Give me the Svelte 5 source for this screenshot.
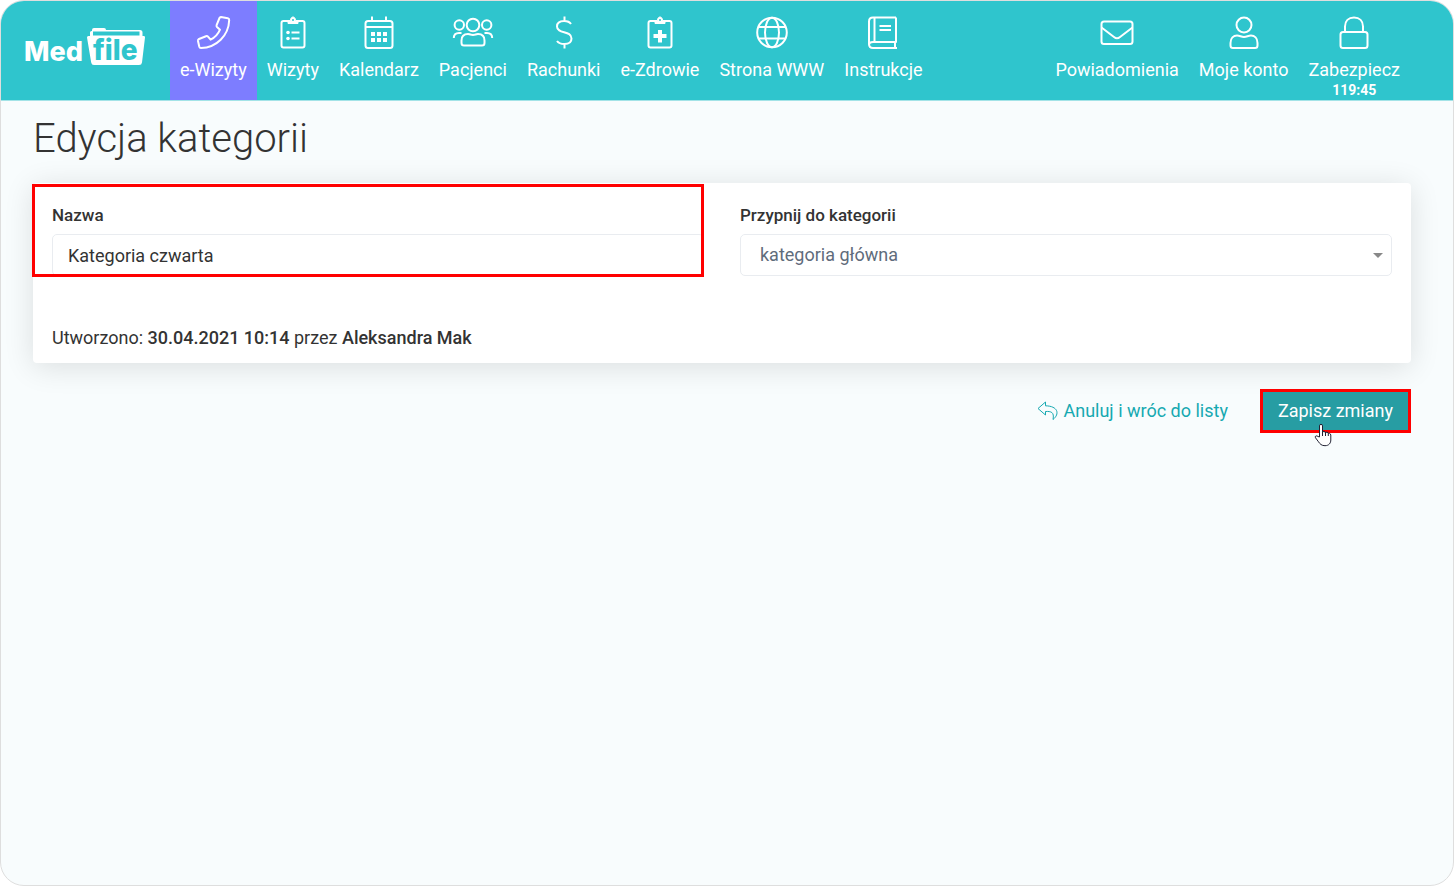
<script>
    let name = $state("Kategoria czwarta");
    let parent = $state("main");

    const mainNav = [
        { label: "e-Wizyty", icon: "phone", active: true },
        { label: "Wizyty", icon: "list" },
        { label: "Kalendarz", icon: "calendar" },
        { label: "Pacjenci", icon: "people" },
        { label: "Rachunki", icon: "dollar" },
        { label: "e-Zdrowie", icon: "health" },
        { label: "Strona WWW", icon: "globe" },
        { label: "Instrukcje", icon: "book" }
    ];
    const userNav = [
        { label: "Powiadomienia", icon: "mail" },
        { label: "Moje konto", icon: "user" },
        { label: "Zabezpiecz", icon: "lock", timer: "119:45" }
    ];
</script>

{#snippet icon(type)}
    <svg class="icon" viewBox="0 0 42 34" aria-hidden="true">
        {#if type == "phone"}
            <path d="M29 2L35.800 3.200Q37.300 3.500 37.200 5.200C36.600 20.500 24.500 32.600 9 33Q7.600 33 7.300 31.800L6 26Q5.800 24.600 7 24L14 21.200Q15.200 20.800 16 21.700L18.600 24.700C23 22.500 26.200 19 28 14.700L25 12Q24.200 11.200 24.600 10.100L27.500 3Q28 1.900 29 2Z" />
        {:else if type == "list" || type == "health"}
            <path d="M16 6H11.500Q9.500 6 9.500 8V30.500Q9.500 32.500 11.500 32.500H30.500Q32.500 32.500 32.500 30.500V8Q32.500 6 30.500 6H26" />
            <path d="M16 8.500V5.500H18.500C18.500 .8 23.500 .8 23.500 5.500H26V8.500Z" class="clip" />
            <circle cx="21" cy="5" r="1" class="hole" />
            {#if type == "list"}
                <path d="M19.500 17.500H27.500M19.500 23.500H27.500" />
                <circle cx="16" cy="17.500" r="1.800" class="solid" />
                <circle cx="16" cy="23.500" r="1.800" class="solid" />
            {:else}
                <path d="M19 15H23V19H27.500V23H23V27.500H19V23H14.500V19H19Z" class="solid" />
            {/if}
        {:else if type == "calendar"}
            <rect x="7.500" y="6" width="27" height="27" rx="2.500" />
            <path d="M7.500 12H34.500M14 1.500V6M28 1.500V6" />
            <path d="M13 17h4v4h-4zM19 17h4v4h-4zM25 17h4v4h-4zM13 23h4v4h-4zM19 23h4v4h-4zM25 23h4v4h-4z" class="solid" />
        {:else if type == "people"}
            <circle cx="21" cy="10" r="6.300" />
            <circle cx="7.300" cy="10" r="4.700" />
            <circle cx="34.700" cy="10" r="4.700" />
            <path d="M12 30.500Q9.500 30.500 9.500 28V25.500C9.500 21 12.500 19 16 19Q17.500 19 18.500 19.500Q21 20.300 23.500 19.500Q24.500 19 26 19C29.500 19 32.500 21 32.500 25.500V28Q32.500 30.500 30 30.500Z" />
            <path d="M1.800 23C1.800 19.500 4 18 7 18H9.500M40.200 23C40.200 19.500 38 18 35 18H32.500" />
        {:else if type == "dollar"}
            <path d="M28 9C26.500 6.500 24 6 21 6C16.500 6 14 8.200 14 11.500C14 19.500 28.500 15 28.500 23.500C28.500 27 26 29 21.500 29C18 29 15.500 28.300 14 26M21.500 1.500V6M21.500 29V33.500" />
        {:else if type == "globe"}
            <circle cx="21" cy="17.500" r="14.800" />
            <ellipse cx="21" cy="17.500" rx="7" ry="14.800" />
            <path d="M7.500 12H34.500M7.500 23.500H34.500" />
        {:else if type == "book"}
            <path d="M34 2.500H11Q7 2.500 7 6.500V29Q7 33 11 33H35M34 2.500V27H11Q7 27 7 30M12.500 3V27M33 27V33M17.500 11H29M17.500 15H29" />
        {:else if type == "mail"}
            <rect x="5.500" y="6.500" width="31" height="22.500" rx="2.500" />
            <path d="M5.500 12.500L18 22Q21 24.500 24 22L36.500 12.500" />
        {:else if type == "user"}
            <circle cx="21" cy="10" r="7.500" />
            <path d="M10 33Q7.500 33 7.500 30.500V28C7.500 23 10.500 20.500 14 20.500C17 20.500 18 22 21 22C24 22 25 20.500 28 20.500C31.500 20.500 34.500 23 34.500 28V30.500Q34.500 33 32 33Z" />
        {:else if type == "lock"}
            <rect x="7.500" y="17" width="27" height="16" rx="2.500" />
            <path d="M12 17V11.500C12 6 15.500 2.500 21 2.500C26.500 2.500 30 6 30 11.500V17" />
        {/if}
    </svg>
{/snippet}

{#snippet navItem(item)}
    <a class="navItem" class:active={item.active} href="/">
        {@render icon(item.icon)}
        <span>{item.label}</span>
        {#if item.timer}
            <strong>{item.timer}</strong>
        {/if}
    </a>
{/snippet}

<div class="page">
    <header>
        <a class="logo" href="/" aria-label="Med file">
            <svg viewBox="0 0 122 40">
                <text x="-1" y="33" class="med">Med</text>
                <path d="M65 8V4.500Q65 3 66.500 3H67V2Q67 0 69 0H79Q81 0 81 2H115Q117.500 2 117.500 4.500V8H119Q120.200 8 120 9.500L117 34.500Q116.700 37 114 37H69Q66.500 37 66.200 34.500L62 9.500Q61.800 8 63.500 8Z" class="folder" />
                <path d="M68 3.500H114.500V7.500H68Z" class="slot" />
                <text x="68" y="32" class="file">file</text>
            </svg>
        </a>
        <nav>
            {#each mainNav as item}
                {@render navItem(item)}
            {/each}
        </nav>
        <nav class="user">
            {#each userNav as item}
                {@render navItem(item)}
            {/each}
        </nav>
    </header>

    <main>
        <h1>Edycja kategorii</h1>
        <form>
            <div class="card">
                <div class="fields">
                    <div class="field marked">
                        <label for="name">Nazwa</label>
                        <input id="name" type="text" bind:value={name}>
                    </div>
                    <div class="field">
                        <label for="parent">Przypnij do kategorii</label>
                        <div class="selectBox">
                            <select id="parent" bind:value={parent}>
                                <option value="main">kategoria główna</option>
                            </select>
                        </div>
                    </div>
                </div>
                <p>Utworzono: <b>30.04.2021 10:14</b> przez <b>Aleksandra Mak</b></p>
            </div>
            <div class="actions">
                <a href="/">
                    <svg viewBox="0 0 22 20" aria-hidden="true">
                        <path d="M8.500 1L1 7.500L8.500 14V10.500C14 10.200 17.500 11 16 18.500C23 13 21 5 8.500 4.800Z" />
                    </svg>
                    Anuluj i wróc do listy
                </a>
                <div class="save">
                    <button type="button">Zapisz zmiany</button>
                    <svg class="pointer" viewBox="0 0 18 24" aria-hidden="true">
                        <path d="M5.500 14V3Q5.500 1.300 7 1.300T8.500 3V9.500Q8.500 8.500 10 8.500T11.500 10Q11.500 9 13 9.200T14.300 10.800Q14.500 10 15.500 10.300T16.800 12V17C16.800 20 15 22.700 11 22.700C7.500 22.700 6 21 4.500 18.800L1.500 14.800Q.800 13.700 1.800 13Q3 12.500 4 13.500Z" />
                        <path d="M8.500 9V13M11.500 10V13M14.300 11V13" />
                    </svg>
                </div>
            </div>
        </form>
    </main>
</div>

<style>
    :global(body) {
        background-color: white;
    }
    .page {
        --teal: #2fc5cd;
        min-height: 100vh;
        box-sizing: border-box;
        border: 1px solid #dedede;
        border-radius: 24px;
        overflow: hidden;
        background-color: #f8fcfd;
        color: #333;
        font-family: Roboto, "Liberation Sans", sans-serif;
        font-size: 18px;
        line-height: 24px;
    }

    header {
        display: flex;
        height: 99px;
        padding-right: 43px;
        background-color: var(--teal);
        box-shadow: 0 1px 0 #a3e3e7;
    }
    .logo {
        box-sizing: border-box;
        width: 169px;
        padding: 27px 0 0 24px;
    }
    .logo svg {
        display: block;
        width: 122px;
        height: 40px;
        overflow: visible;
    }
    .logo text {
        font-family: Inter, "Liberation Sans", sans-serif;
        font-weight: 800;
    }
    .med {
        fill: white;
        font-size: 27px;
    }
    .file {
        fill: var(--teal);
        font-size: 28px;
    }
    .folder {
        fill: white;
    }
    .slot {
        fill: var(--teal);
    }
    nav {
        display: flex;
    }
    .user {
        margin-left: auto;
    }
    .navItem {
        display: flex;
        flex-direction: column;
        align-items: center;
        padding: 14px 10px 0;
        color: white;
        text-decoration: none;
        white-space: nowrap;
    }
    .active {
        background-color: #7d7dff;
    }
    .navItem span {
        margin-top: 9px;
    }
    .navItem strong {
        font-size: 14px;
        line-height: 16px;
    }
    .icon {
        width: 42px;
        height: 34px;
        fill: none;
        stroke: white;
        stroke-width: 2;
        stroke-linejoin: round;
    }
    .clip {
        fill: white;
        stroke-width: 1;
    }
    .hole {
        fill: var(--teal);
        stroke: none;
    }
    .solid {
        fill: white;
        stroke: none;
    }

    main {
        padding: 15px 42px 40px 32px;
    }
    h1 {
        margin: 0 0 20px;
        font-size: 40px;
        font-weight: 300;
        line-height: 48px;
    }
    .card {
        padding: 20px 19px 13px;
        background-color: white;
        border-radius: 4px;
        box-shadow: 0 4px 30px rgba(0, 0, 0, 0.12);
    }
    .fields {
        display: grid;
        grid-template-columns: 1fr 1fr;
        gap: 36px;
    }
    .field {
        position: relative;
    }
    .marked::after {
        content: "";
        position: absolute;
        inset: -19px 0 -1px -20px;
        border: 3px solid red;
        pointer-events: none;
    }
    label {
        display: block;
        margin-bottom: 7px;
        font-size: 17px;
        font-weight: 500;
    }
    input, select {
        display: block;
        box-sizing: border-box;
        width: 100%;
        height: 42px;
        padding: 0 15px;
        border: 1px solid #e9ecf0;
        border-radius: 5px;
        background-color: white;
        color: #333;
        font: inherit;
    }
    .selectBox {
        position: relative;
    }
    .selectBox::after {
        content: "";
        position: absolute;
        top: 19px;
        right: 9px;
        border: 5px solid transparent;
        border-top-color: #888;
        border-bottom: 0;
        pointer-events: none;
    }
    select {
        padding: 0 19px;
        appearance: none;
        color: #5f6c7b;
    }
    p {
        margin: 50px 0 0;
    }
    b {
        font-weight: 500;
    }

    .actions {
        display: flex;
        justify-content: flex-end;
        align-items: center;
        gap: 32px;
        margin-top: 26px;
    }
    .actions a {
        display: flex;
        align-items: center;
        gap: 4px;
        color: #16a9b1;
        text-decoration: none;
    }
    .actions a svg {
        width: 22px;
        height: 20px;
        fill: none;
        stroke: currentColor;
        stroke-width: 1;
        stroke-linejoin: round;
    }
    .save {
        position: relative;
    }
    button {
        display: block;
        height: 44px;
        padding: 0 15px;
        border: 3px solid red;
        background-color: #279da3;
        color: white;
        font: inherit;
    }
    .pointer {
        position: absolute;
        left: 54px;
        top: 34px;
        width: 18px;
        height: 24px;
        fill: white;
        stroke: #223;
        stroke-width: 1;
    }
</style>
